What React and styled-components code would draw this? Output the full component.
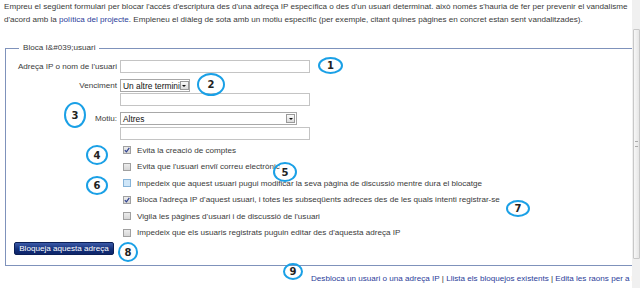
import React from 'react'
import styled, { createGlobalStyle } from 'styled-components'

const Global = createGlobalStyle`
  html, body { margin: 0; padding: 0; background: #fff; }
  body { font-family: "Liberation Sans", Arial, sans-serif; font-size: 8.1px; color: #333; overflow: hidden; }
`

const Page = styled.div`
  position: relative;
  display: flex;
  width: 640px;
  height: 288px;
  overflow: hidden;
`

const Main = styled.div`
  flex: 1;
  min-width: 0;
  display: flex;
  flex-direction: column;
`

const Scrollbar = styled.div`
  width: 8px;
  flex: none;
  background: #f0f0f0;
  display: flex;
  flex-direction: column;
  padding: 29px 0 29px;
  box-sizing: border-box;
`

const Thumb = styled.div`
  flex: 1;
  margin: 0 0 0 1px;
  border: 1px solid #c8c8c8;
  border-radius: 1px;
  background: linear-gradient(90deg, #f7f7f7, #e6e6e6);
  display: flex;
  align-items: center;
  justify-content: center;
  &::after {
    content: '';
    width: 3px;
    height: 4px;
    border-top: 1px solid #aaa;
    border-bottom: 1px solid #aaa;
  }
`

const Intro = styled.p`
  margin: 1px 0 0;
  padding: 0 4px;
  line-height: 12.5px;
  color: #3a3a3a;
  white-space: nowrap;
`

const Link = styled.a`
  color: #2b3d99;
  text-decoration: none;
`

const Fieldset = styled.fieldset`
  margin: 17px 0 0 5px;
  padding: 4px 0 10px 3px;
  border: 1px solid #7f92bb;
  border-right: none;
  min-width: 0;
`

const Legend = styled.legend`
  margin-left: 10px;
  padding: 0 4px;
  color: #3a3a3a;
  line-height: 10px;
`

const Row = styled.div`
  display: grid;
  grid-template-columns: 108px 1fr;
  column-gap: 3px;
  align-items: center;
  margin-top: ${p => p.$gap || 0}px;
`

const Label = styled.label`
  text-align: right;
  color: #3a3a3a;
  white-space: nowrap;
`

const TextInput = styled.div`
  width: ${p => p.$w || 190}px;
  height: 13px;
  box-sizing: border-box;
  border: 1px solid #c4c4c4;
  background: #fff;
`

const Select = styled.div`
  width: ${p => p.$w}px;
  height: 13px;
  box-sizing: border-box;
  border: 1px solid #a8a8a8;
  background: #fff;
  display: flex;
  align-items: center;
  justify-content: space-between;
  padding-left: 2px;
  color: #111;
  font-size: 8.4px;
  white-space: nowrap;
  overflow: hidden;
`

const Arrow = styled.span`
  width: 9px;
  height: 9px;
  flex: none;
  margin-right: 1px;
  box-sizing: border-box;
  border: 1px solid #9a9a9a;
  background: linear-gradient(#fafafa, #dcdcdc);
  display: flex;
  align-items: center;
  justify-content: center;
  &::after {
    content: '';
    border-left: 2px solid transparent;
    border-right: 2px solid transparent;
    border-top: 2px solid #111;
  }
`

const Checks = styled.div`
  display: flex;
  flex-direction: column;
  gap: 8.6px;
  margin: 6px 0 0 114px;
`

const CheckRow = styled.div`
  display: flex;
  align-items: center;
  gap: 6px;
  height: 8px;
  color: #3a3a3a;
  white-space: nowrap;
`

const Box = styled.span`
  width: 8px;
  height: 8px;
  box-sizing: border-box;
  border: 1px solid ${p => (p.$hover ? '#86b3d8' : '#a0a0a0')};
  background: ${p => (p.$hover ? '#cfe6f8' : 'linear-gradient(#ececec, #d6d6d6)')};
  display: flex;
  align-items: center;
  justify-content: center;
  flex: none;
`

const Button = styled.button`
  margin: 5px 0 0 5px;
  width: 100px;
  height: 13px;
  padding: 0;
  border: 1px solid #0b1f55;
  border-radius: 2px;
  background: linear-gradient(#3b5aa8, #14307a 55%, #0d256a);
  color: #fff;
  font-family: inherit;
  font-size: 8.1px;
  line-height: 11px;
  align-self: flex-start;
`

const FormBody = styled.div`
  display: flex;
  flex-direction: column;
`

const Footer = styled.div`
  margin: 8px 0 0 311px;
  white-space: nowrap;
  color: #333;
`

const Marker = styled.span`
  position: absolute;
  left: ${p => p.$x}px;
  top: ${p => p.$y}px;
  width: ${p => p.$w}px;
  height: ${p => p.$h}px;
  box-sizing: border-box;
  border: 2.5px solid #1aa0e6;
  border-radius: 50%;
  display: flex;
  align-items: center;
  justify-content: center;
  font-family: "DejaVu Sans", sans-serif;
  font-weight: bold;
  font-size: 10px;
  color: #222;
  background: transparent;
`

const Tick = () => (
  <svg width="6" height="6" viewBox="0 0 6 6">
    <path d="M0.8 3.2 L2.4 4.8 L5.3 0.9" fill="none" stroke="#2c3f8f" strokeWidth="1.2" />
  </svg>
)

const options = [
  { text: 'Evita la creació de comptes', checked: true },
  { text: "Evita que l'usuari enviï correu electrònic" },
  { text: "Impedeix que aquest usuari pugui modificar la seva pàgina de discussió mentre dura el blocatge", hover: true },
  { text: "Bloca l'adreça IP d'aquest usuari, i totes les subseqüents adreces des de les quals intenti registrar-se", checked: true },
  { text: "Vigila les pàgines d'usuari i de discussió de l'usuari" },
  { text: "Impedeix que els usuaris registrats puguin editar des d'aquesta adreça IP" },
]

const markers = [
  { n: 1, x: 318, y: 57, w: 25, h: 17 },
  { n: 2, x: 197, y: 73, w: 28, h: 23 },
  { n: 3, x: 64, y: 102, w: 22, h: 26 },
  { n: 4, x: 86, y: 145, w: 22, h: 20 },
  { n: 5, x: 273, y: 162, w: 24, h: 20 },
  { n: 6, x: 86, y: 176, w: 22, h: 19 },
  { n: 7, x: 506, y: 200, w: 24, h: 17 },
  { n: 8, x: 118, y: 242, w: 20, h: 20 },
  { n: 9, x: 283, y: 263, w: 20, h: 17 },
]

export default function App() {
  return (
    <Page>
      <Global />
      <Main>
        <Intro>
          Empreu el següent formulari per blocar l'accés d'escriptura des d'una adreça IP específica o des d'un usuari determinat. això només s'hauria de fer per prevenir el vandalisme
          <br />
          d'acord amb la <Link>política del projecte</Link>. Empleneu el diàleg de sota amb un motiu específic (per exemple, citant quines pàgines en concret estan sent vandalitzades).
        </Intro>
        <Fieldset>
          <Legend>Bloca I&amp;#039;usuari</Legend>
          <FormBody>
            <Row $gap={3}>
              <Label>Adreça IP o nom de l'usuari</Label>
              <TextInput />
            </Row>
            <Row $gap={6}>
              <Label>Venciment</Label>
              <Select $w={70}>Un altre termini<Arrow /></Select>
            </Row>
            <Row $gap={1}>
              <span />
              <TextInput />
            </Row>
            <Row $gap={6}>
              <Label>Motiu:</Label>
              <Select $w={177}>Altres<Arrow /></Select>
            </Row>
            <Row $gap={2}>
              <span />
              <TextInput />
            </Row>
            <Checks>
              {options.map(o => (
                <CheckRow key={o.text}>
                  <Box $hover={o.hover}>{o.checked && <Tick />}</Box>
                  {o.text}
                </CheckRow>
              ))}
            </Checks>
            <Button>Bloqueja aquesta adreça</Button>
          </FormBody>
        </Fieldset>
        <Footer>
          <Link>Desbloca un usuari o una adreça IP</Link> | <Link>Llista els bloquejos existents</Link> | <Link>Edita les raons per a blocar</Link>
        </Footer>
      </Main>
      <Scrollbar>
        <Thumb />
      </Scrollbar>
      {markers.map(m => (
        <Marker key={m.n} $x={m.x} $y={m.y} $w={m.w} $h={m.h}>{m.n}</Marker>
      ))}
    </Page>
  )
}
